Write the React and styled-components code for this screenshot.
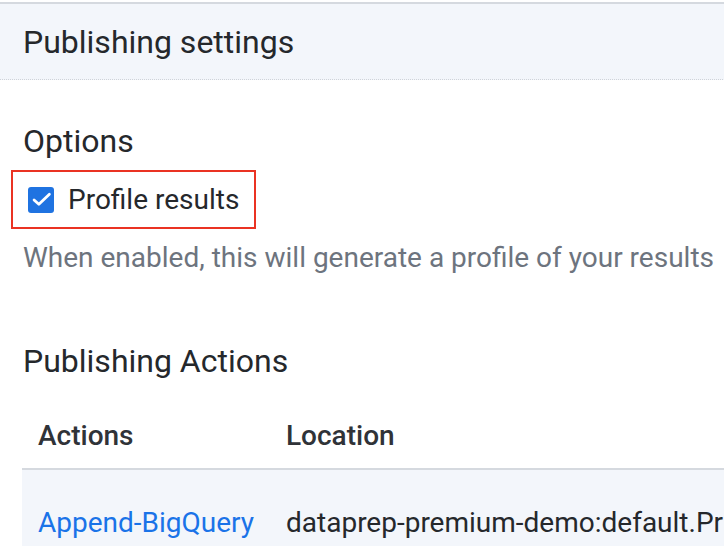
import React from 'react';
import styled, { createGlobalStyle } from 'styled-components';

const GlobalStyle = createGlobalStyle`
  html, body {
    margin: 0;
    padding: 0;
    background: #ffffff;
    overflow: hidden;
  }
  body {
    font-family: Roboto, "Liberation Sans", Arial, sans-serif;
    color: #202124;
  }
`;

const Page = styled.div`
  width: 724px;
  height: 546px;
  overflow: hidden;
  padding-top: 2px;
  box-sizing: border-box;
`;

const SettingsHeader = styled.header`
  width: 760px;
  height: 75px;
  display: flex;
  align-items: center;
  padding-left: 23px;
  box-sizing: content-box;
  background: #f3f6fb;
  border-top: 2px solid #d5d9df;
  border-bottom: 1px dotted #cfd3d9;
`;

const Title = styled.h1`
  margin: 0;
  font-size: 32px;
  line-height: 38px;
  font-weight: 400;
  color: #25282c;
`;

const Body = styled.main`
  padding: 0 0 0 23px;
  display: flex;
  flex-direction: column;
`;

const SectionTitle = styled.h2`
  margin: ${({ $top }) => $top}px 0 0;
  font-size: 32px;
  line-height: 38px;
  font-weight: 400;
  color: #25282c;
`;

const Highlight = styled.label`
  margin: 10px 0 0 -12px;
  width: 245px;
  height: 59px;
  box-sizing: border-box;
  border: 2px solid #ea3323;
  display: flex;
  align-items: center;
  gap: 14px;
  padding-left: 15px;
  cursor: pointer;
`;

const Checkbox = styled.span`
  width: 26px;
  height: 26px;
  border-radius: 3px;
  background: #1f73e1;
  display: flex;
  align-items: center;
  justify-content: center;
  flex-shrink: 0;
`;

const CheckLabel = styled.span`
  font-size: 28px;
  line-height: 34px;
  color: #25282c;
  white-space: nowrap;
`;

const Hint = styled.p`
  margin: 12px 0 0;
  font-size: 28px;
  line-height: 34px;
  color: #6d747e;
  white-space: nowrap;
`;

const Table = styled.div`
  margin: 23px 0 0 -1px;
  width: 760px;
  display: flex;
  flex-direction: column;
`;

const HeadRow = styled.div`
  display: grid;
  grid-template-columns: 248px 1fr;
  height: 65px;
  align-items: center;
  border-bottom: 2px solid #d5d9df;
  padding-left: 16px;
`;

const Row = styled.div`
  display: grid;
  grid-template-columns: 248px 1fr;
  height: 105px;
  align-items: center;
  background: #f3f6fb;
  padding-left: 16px;
`;

const HeadCell = styled.span`
  font-size: 28px;
  line-height: 34px;
  font-weight: 500;
  color: #303338;
`;

const Cell = styled.span`
  font-size: 28px;
  line-height: 34px;
  color: ${({ $link }) => ($link ? '#1a73e8' : '#25282c')};
  white-space: nowrap;
`;

const CheckIcon = () => (
  <svg width="21" height="21" viewBox="0 0 24 24" fill="none">
    <path d="M3.5 12.5l5.5 5L21 6" stroke="#ffffff" strokeWidth="3.2" strokeLinecap="round" strokeLinejoin="round" />
  </svg>
);

export default function App() {
  return (
    <>
      <GlobalStyle />
      <Page>
        <SettingsHeader>
          <Title>Publishing settings</Title>
        </SettingsHeader>
        <Body>
          <SectionTitle $top={42}>Options</SectionTitle>
          <Highlight>
            <Checkbox>
              <CheckIcon />
            </Checkbox>
            <CheckLabel>Profile results</CheckLabel>
          </Highlight>
          <Hint>When enabled, this will generate a profile of your results</Hint>
          <SectionTitle $top={67}>Publishing Actions</SectionTitle>
          <Table>
            <HeadRow>
              <HeadCell>Actions</HeadCell>
              <HeadCell>Location</HeadCell>
            </HeadRow>
            <Row>
              <Cell $link>Append-BigQuery</Cell>
              <Cell>dataprep-premium-demo:default.Pr</Cell>
            </Row>
          </Table>
        </Body>
      </Page>
    </>
  );
}
